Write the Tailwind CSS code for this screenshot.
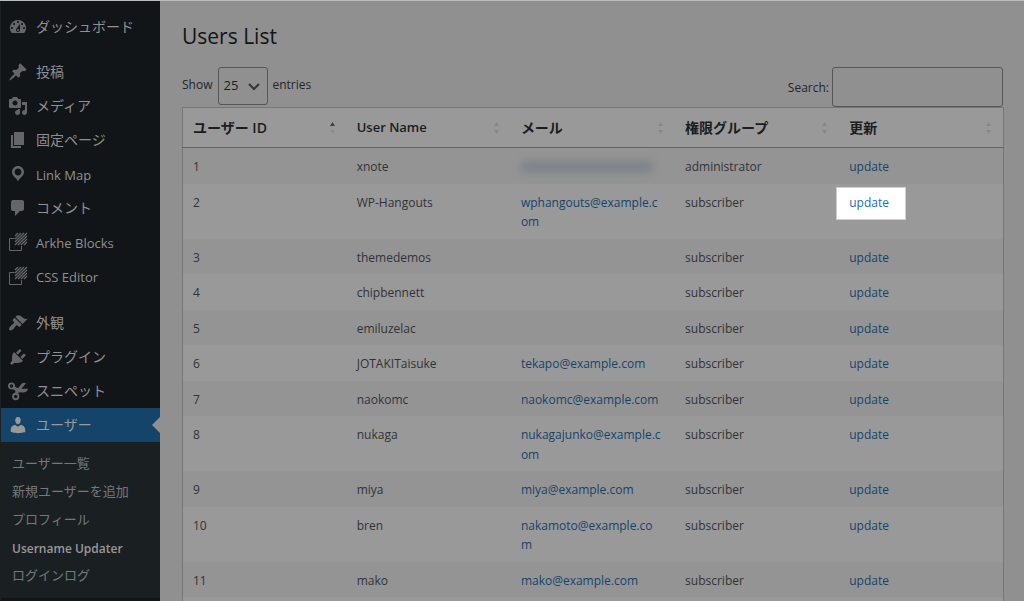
<!DOCTYPE html>
<html lang="ja">
<head>
<meta charset="utf-8">
<title>Users List</title>
<script src="https://cdn.jsdelivr.net/npm/@tailwindcss/browser@4"></script>
</head>
<body class="h-screen overflow-hidden border-t border-[#bcbcbc] bg-[#909091] font-['Open_Sans','Noto_Sans_CJK_JP',sans-serif] text-xs leading-relaxed text-[#242629]">
<div class="flex h-full">
  <nav aria-label="メインメニュー" class="w-40 shrink-0 overflow-hidden border-l border-[#1b2023] bg-[#111517] pt-[9px] text-[13px] text-[#909091]">
    <ul class="[&_svg]:size-5 [&_svg]:shrink-0 [&_svg]:fill-current [&_svg]:text-[#646668]">
      <li class="mb-[11px]"><a href="#" class="flex h-[34px] items-center gap-2 pl-[7px] text-sm"><svg viewBox="0 0 20 20"><path fill-rule="evenodd" d="M3.76 16h12.48A7.998 7.998 0 0 0 10 3a7.998 7.998 0 0 0-6.24 13zM10 4c.55 0 1 .45 1 1s-.45 1-1 1-1-.45-1-1 .45-1 1-1zM6 6c.55 0 1 .45 1 1s-.45 1-1 1-1-.45-1-1 .45-1 1-1zm8 0c.55 0 1 .45 1 1s-.45 1-1 1-1-.45-1-1 .45-1 1-1zm-5.37 5.55L12 7v6c0 1.1-.9 2-2 2s-2-.9-2-2c0-.57.24-1.08.63-1.45zM4 10c.55 0 1 .45 1 1s-.45 1-1 1-1-.45-1-1 .45-1 1-1zm12 0c.55 0 1 .45 1 1s-.45 1-1 1-1-.45-1-1 .45-1 1-1zm-5 3c0-.55-.45-1-1-1s-1 .45-1 1 .45 1 1 1 1-.45 1-1z"/></svg>ダッシュボード</a></li>
      <li><a href="#" class="flex h-[34px] items-center gap-2 pl-[7px] text-sm"><svg viewBox="0 0 20 20"><path d="M10.44 3.02l1.82-1.82 6.36 6.35-1.83 1.82c-1.05-.68-2.48-.57-3.41.36l-.75.75c-.92.93-1.04 2.35-.35 3.41l-1.83 1.82-2.41-2.41-2.8 2.79c-.42.42-3.38 2.71-3.8 2.29s1.86-3.39 2.28-3.81l2.79-2.79L4.1 9.36l1.83-1.82c1.05.69 2.48.57 3.4-.36l.75-.75c.93-.92 1.05-2.35.36-3.41z"/></svg>投稿</a></li>
      <li><a href="#" class="flex h-[34px] items-center gap-2 pl-[7px] text-sm"><svg viewBox="0 0 20 20"><path fill-rule="evenodd" d="M13 11V4c0-.55-.45-1-1-1h-1.67L9 1H5L3.67 3H2c-.55 0-1 .45-1 1v7c0 .55.45 1 1 1h10c.55 0 1-.45 1-1zM7 4.5c1.38 0 2.5 1.12 2.5 2.5S8.38 9.5 7 9.5 4.5 8.38 4.5 7 5.62 4.5 7 4.5zM14 6h5v10.5c0 1.38-1.12 2.5-2.5 2.5S14 17.88 14 16.5s1.12-2.5 2.5-2.5c.17 0 .34.02.5.05V9h-3V6zm-4 8.05V13h2v3.5c0 1.38-1.12 2.5-2.5 2.5S7 17.88 7 16.5 8.12 14 9.5 14c.17 0 .34.02.5.05z"/></svg>メディア</a></li>
      <li><a href="#" class="flex h-[34px] items-center gap-2 pl-[7px] text-sm"><svg viewBox="0 0 20 20"><path d="M6 15V2h10v13H6zm-1 1h8v2H3V5h2v11z"/></svg>固定ページ</a></li>
      <li><a href="#" class="flex h-[34px] items-center gap-2 pl-[7px]"><svg viewBox="0 0 20 20"><path fill-rule="evenodd" d="M10 2C6.69 2 4 4.69 4 8c0 2.02 1.17 3.71 2.53 4.89.43.37 1.18.96 1.85 1.83.74.97 1.41 2.01 1.62 2.71.21-.7.88-1.74 1.62-2.71.67-.87 1.42-1.46 1.85-1.83C14.83 11.71 16 10.02 16 8c0-3.31-2.69-6-6-6zm0 2.56c1.9 0 3.44 1.54 3.44 3.44S11.9 11.44 10 11.44 6.56 9.9 6.56 8 8.1 4.56 10 4.56z"/></svg><span class="pt-[3px]">Link Map</span></a></li>
      <li><a href="#" class="flex h-[34px] items-center gap-2 pl-[7px] text-sm"><svg viewBox="0 0 20 20"><path d="M5 2h9c1.1 0 2 .9 2 2v7c0 1.1-.9 2-2 2h-2l-5 5v-5H5c-1.1 0-2-.9-2-2V4c0-1.1.9-2 2-2z"/></svg>コメント</a></li>
      <li><a href="#" class="flex h-[34px] items-center gap-2 pl-[7px]"><svg viewBox="0 0 20 20"><path fill="none" stroke="currentColor" d="M6.500 6.500H1.500v12h12V14"/><path fill="none" stroke="currentColor" stroke-width="1.300" d="M7 4l3-3M7 7l6-6M7 10l9-9M7 13L19 1M10 13l9-9M13 13l6-6M16 13l3-3"/></svg><span class="pt-[3px]">Arkhe Blocks</span></a></li>
      <li class="mb-[13px]"><a href="#" class="flex h-[34px] items-center gap-2 pl-[7px]"><svg viewBox="0 0 20 20"><path fill="none" stroke="currentColor" d="M6.500 6.500H1.500v12h12V14"/><path fill="none" stroke="currentColor" stroke-width="1.300" d="M7 4l3-3M7 7l6-6M7 10l9-9M7 13L19 1M10 13l9-9M13 13l6-6M16 13l3-3"/></svg><span class="pt-[3px]">CSS Editor</span></a></li>
      <li><a href="#" class="flex h-[34px] items-center gap-2 pl-[7px] text-sm"><svg viewBox="0 0 20 20"><path d="M14.48 11.06L7.41 3.99l1.500-1.500c.5-.56 2.300-.47 3.510.32 1.210.8 1.430 1.280 2.910 2.100 1.180.64 2.450 1.260 4.450.85zm-.71.71L6.700 4.700 4.930 6.470c-.39.39-.39 1.020 0 1.410l1.060 1.060c.39.39.39 1.030 0 1.420-.6.6-1.430 1.110-2.210 1.690-.35.26-.7.53-1.010.84C1.430 14.230.4 16.080 1.400 17.070c.99 1 2.840-.03 4.180-1.360.31-.31.58-.66.85-1.020.57-.78 1.080-1.610 1.690-2.210.39-.39 1.020-.39 1.410 0l1.060 1.060c.39.39 1.020.39 1.410 0z"/></svg>外観</a></li>
      <li><a href="#" class="flex h-[34px] items-center gap-2 pl-[7px] text-sm"><svg viewBox="0 0 20 20"><path d="M13.11 4.36L9.87 7.6 8 5.73l3.24-3.24c.35-.34 1.05-.2 1.56.32.52.51.66 1.21.31 1.55zm-8 1.77l.91-1.12 9.01 9.01-1.19.84c-.71.71-2.63 1.16-3.82 1.16H6.14L4.9 17.26c-.59.59-1.54.59-2.12 0-.59-.58-.59-1.53 0-2.12l1.24-1.24v-3.88c0-1.13.4-3.19 1.09-3.89zm7.26 3.97l3.24-3.24c.34-.35 1.04-.21 1.55.31.52.51.66 1.21.31 1.55l-3.24 3.25z"/></svg>プラグイン</a></li>
      <li><a href="#" class="flex h-[34px] items-center gap-2 pl-[7px] text-sm"><svg viewBox="0 0 20 20"><circle cx="3.500" cy="5" r="2.600" fill="none" stroke="currentColor" stroke-width="1.900"/><circle cx="7.700" cy="15.500" r="2.700" fill="none" stroke="currentColor" stroke-width="1.900"/><path d="M3.500 7.500L6 5l4 2.200L13.500 3C14.800 1.500 16.600 1.300 18 2.200L13.400 7.800H20c-.5 2.400-2.400 3.700-4.600 3.600l-4.600-.2-1.400 3.300-2.700-1 .8-3.700z"/></svg>スニペット</a></li>
      <li class="relative bg-[#14446a]"><a href="#" aria-current="page" class="flex h-[34px] items-center gap-2 pl-[7px] text-sm text-[#999999]"><svg viewBox="0 0 20 20" class="fill-[#999999]!"><path d="M10 9.25c-2.27 0-2.73-3.44-2.73-3.44C7 4.02 7.82 2 9.97 2c2.16 0 2.98 2.02 2.71 3.81 0 0-.41 3.44-2.68 3.44zm0 2.57L12.72 10c2.39 0 4.52 2.33 4.52 4.53v2.49s-3.65 1.13-7.24 1.13c-3.65 0-7.24-1.13-7.24-1.13v-2.49c0-2.25 1.94-4.48 4.47-4.48z"/></svg>ユーザー</a>
        <span class="absolute top-[9px] right-0 border-y-8 border-r-8 border-y-transparent border-r-[#909091]"></span></li>
    </ul>
    <ul class="bg-[#1a1f22] pt-2 pb-2 text-[#75787b]">
      <li><a href="#" class="flex h-7 items-center pl-[11px]">ユーザー一覧</a></li>
      <li><a href="#" class="flex h-7 items-center pl-[11px]">新規ユーザーを追加</a></li>
      <li><a href="#" class="flex h-7 items-center pl-[11px]">プロフィール</a></li>
      <li><a href="#" class="flex h-7 items-center pt-px pl-[11px] text-xs font-semibold text-[#999999]">Username Updater</a></li>
      <li><a href="#" class="flex h-7 items-center pl-[11px]">ログインログ</a></li>
    </ul>
  </nav>

  <main class="min-w-0 flex-1 pt-5 pr-5 pl-[22px]">
    <h1 class="text-[21px] leading-[30px] text-[#111517]">Users List</h1>
    <div class="mt-4 flex items-start justify-between">
      <div class="flex items-start">
        <label for="length" class="pt-2 pr-[6px]">Show</label>
        <div class="relative">
          <select id="length" class="h-[38px] w-[50px] appearance-none rounded-[3px] border border-[#545658] pl-1 text-[13px] text-[#1a1f22]"><option>25</option></select>
          <svg viewBox="0 0 12 8" class="pointer-events-none absolute top-4 right-2 h-2 w-3 fill-none stroke-[#333537] stroke-2"><path d="M1 1l5 5 5-5"/></svg>
        </div>
        <span class="pt-2 pl-1">entries</span>
      </div>
      <div class="flex items-center pr-px">
        <label for="search" class="pt-px pr-[3px]">Search:</label>
        <input id="search" type="search" class="h-10 w-[171px] rounded-[3px] border border-[#545658]">
      </div>
    </div>
    <table class="w-full table-fixed border-collapse border border-[#757678] bg-[#999999] text-[#303336] [&_a]:text-[#14446a] [&_td]:pt-[9px] [&_td]:pr-3 [&_td]:pb-[7px] [&_td]:pl-2.5 [&_td]:align-top [&_td]:break-all [&_tbody_tr:nth-child(odd)]:bg-[#949494] [&_th]:p-0">
      <thead>
        <tr class="h-10 border-b border-[#606264] text-left text-[13px] [&_button]:flex [&_button]:w-full [&_button]:items-center [&_button]:justify-between [&_button]:pr-3 [&_button]:pl-2.5 [&_button]:font-semibold [&_button]:text-[#1a1d20] [&_svg]:h-3 [&_svg]:w-[5px] [&_svg]:fill-[#868788]">
          <th aria-sort="ascending"><button><span class="text-sm">ユーザー ID</span><svg viewBox="0 0 5 12"><path class="fill-[#3f4245]" d="M2.500 0L5 4H0z"/><path class="fill-[#8c8d8e]" d="M2.500 12L5 8H0z"/></svg></button></th>
          <th><button>User Name<svg viewBox="0 0 5 12"><path d="M2.500 0L5 4H0zM2.500 12L5 8H0z"/></svg></button></th>
          <th><button><span class="text-sm">メール</span><svg viewBox="0 0 5 12"><path d="M2.500 0L5 4H0zM2.500 12L5 8H0z"/></svg></button></th>
          <th><button><span class="text-sm">権限グループ</span><svg viewBox="0 0 5 12"><path d="M2.500 0L5 4H0zM2.500 12L5 8H0z"/></svg></button></th>
          <th><button><span class="text-sm">更新</span><svg viewBox="0 0 5 12"><path d="M2.500 0L5 4H0zM2.500 12L5 8H0z"/></svg></button></th>
        </tr>
      </thead>
      <tbody>
        <tr><td>1</td><td>xnote</td><td><div aria-label="非表示" class="mt-1 h-3 w-[132px] bg-[#7d838a] blur-xs"></div></td><td>administrator</td><td><a href="#">update</a></td></tr>
        <tr><td>2</td><td>WP-Hangouts</td><td><a href="#">wphangouts@example.com</a></td><td>subscriber</td><td><a href="#" class="relative isolate text-[#2271b1]!"><span class="absolute -top-[7px] -right-[17px] -bottom-[9px] -left-[13px] -z-10 border border-[#d0d0d0] bg-white"></span>update</a></td></tr>
        <tr><td>3</td><td>themedemos</td><td></td><td>subscriber</td><td><a href="#">update</a></td></tr>
        <tr><td>4</td><td>chipbennett</td><td></td><td>subscriber</td><td><a href="#">update</a></td></tr>
        <tr><td>5</td><td>emiluzelac</td><td></td><td>subscriber</td><td><a href="#">update</a></td></tr>
        <tr><td>6</td><td>JOTAKITaisuke</td><td><a href="#">tekapo@example.com</a></td><td>subscriber</td><td><a href="#">update</a></td></tr>
        <tr><td>7</td><td>naokomc</td><td><a href="#">naokomc@example.com</a></td><td>subscriber</td><td><a href="#">update</a></td></tr>
        <tr><td>8</td><td>nukaga</td><td><a href="#">nukagajunko@example.com</a></td><td>subscriber</td><td><a href="#">update</a></td></tr>
        <tr><td>9</td><td>miya</td><td><a href="#">miya@example.com</a></td><td>subscriber</td><td><a href="#">update</a></td></tr>
        <tr><td>10</td><td>bren</td><td><a href="#">nakamoto@example.com</a></td><td>subscriber</td><td><a href="#">update</a></td></tr>
        <tr><td>11</td><td>mako</td><td><a href="#">mako@example.com</a></td><td>subscriber</td><td><a href="#">update</a></td></tr>
        <tr class="h-9"><td></td><td></td><td></td><td></td><td></td></tr>
      </tbody>
    </table>
  </main>
</div>
</body>
</html>
